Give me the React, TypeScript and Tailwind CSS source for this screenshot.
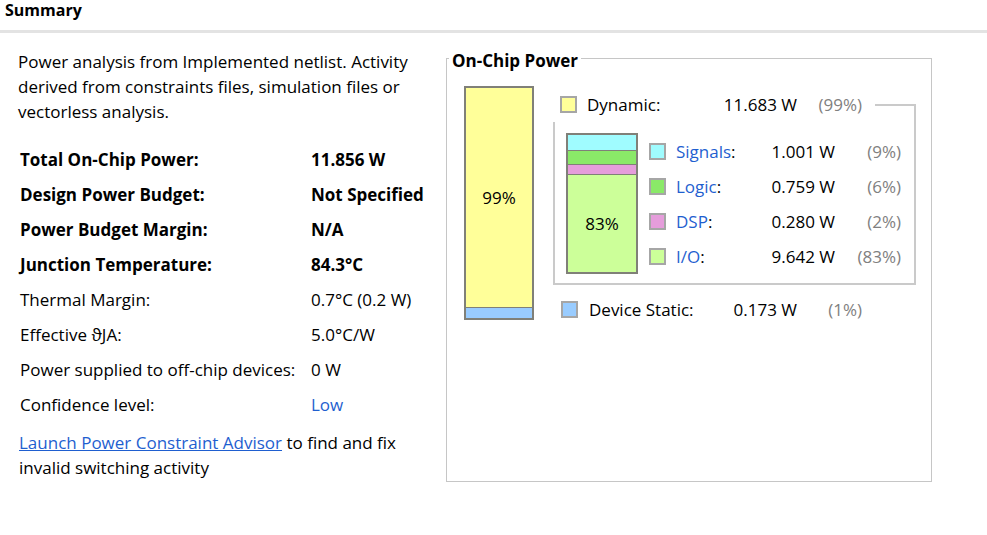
import React from "react";

const font = { fontFamily: '"Open Sans", "Noto Sans", sans-serif' };

function Sq({ color, className = "" }: { color: string; className?: string }) {
  return <div className={`w-[17px] h-[17px] border-2 border-[#a6a6a6] shrink-0 ${className}`} style={{ backgroundColor: color }} />;
}

const rows: [string, string, boolean, boolean?][] = [
  ["Total On-Chip Power:", "11.856 W", true],
  ["Design Power Budget:", "Not Specified", true],
  ["Power Budget Margin:", "N/A", true],
  ["Junction Temperature:", "84.3°C", true],
  ["Thermal Margin:", "0.7°C (0.2 W)", false],
  ["Effective \u03D1JA:", "5.0°C/W", false],
  ["Power supplied to off-chip devices:", "0 W", false],
  ["Confidence level:", "Low", false, true],
];

const subs = [
  { c: "#a0fcff", l: "Signals", v: "1.001 W", p: "(9%)" },
  { c: "#8ae968", l: "Logic", v: "0.759 W", p: "(6%)" },
  { c: "#e59ddb", l: "DSP", v: "0.280 W", p: "(2%)" },
  { c: "#ccff99", l: "I/O", v: "9.642 W", p: "(83%)" },
];

export default function App() {
  return (
    <div className="w-[987px] h-[535px] bg-white text-black text-[17px] overflow-hidden" style={font}>
      <div className="h-[30px] pl-[5px] font-bold text-[16px] leading-[20px] border-b-[3px] border-[#e3e3e3] box-content">Summary</div>
      <div className="flex">
        <div className="w-[446px] shrink-0 pl-[18px] pt-[16px]">
          <p className="leading-[25px] w-[410px]">
            Power analysis from Implemented netlist. Activity derived from constraints files, simulation files or vectorless analysis.
          </p>
          <div className="mt-[18px] pl-[2px]">
            {rows.map(([l, v, b, link]) => (
              <div key={l} className={`flex h-[35px] items-center ${b ? "font-bold" : ""}`}>
                <div className="w-[291px] shrink-0 whitespace-nowrap">{l}</div>
                <div className={`whitespace-nowrap ${link ? "text-[#1f5fd0]" : ""}`}>{v}</div>
              </div>
            ))}
          </div>
          <p className="leading-[25px] mt-[8px] pl-[1px]">
            <span className="text-[#1f5fd0] underline">Launch Power Constraint Advisor</span> to find and fix
            <br />
            invalid switching activity
          </p>
        </div>
        <div className="pt-[25px]">
          <div className="relative w-[486px] h-[424px] border border-[#c6c6c6] pl-[17px] pt-[27px] flex">
            <div className="absolute -top-[10px] left-[2px] bg-white px-[3px] font-bold leading-[24px]">On-Chip Power</div>
            <div className="w-[70px] h-[234px] border-2 border-[#808078] flex flex-col shrink-0">
              <div className="flex-1 bg-[#ffff99] flex items-center justify-center">99%</div>
              <div className="h-[11px] bg-[#99ccff] border-t border-[#808078]" />
            </div>
            <div className="ml-[19px] relative">
              <div className="mt-[18px] w-[363px] h-[181px] border-2 border-[#cacaca] pt-[27px] pl-[11px] flex">
                <div className="w-[72px] h-[141px] border-2 border-[#808078] flex flex-col shrink-0">
                  <div className="h-[16px] bg-[#a0fcff] border-b border-[#808078]" />
                  <div className="h-[14px] bg-[#8ae968] border-b border-[#808078]" />
                  <div className="h-[10px] bg-[#e59ddb] border-b border-[#808078]" />
                  <div className="flex-1 bg-[#ccff99] flex items-center justify-center">83%</div>
                </div>
                <div className="ml-[11px] mt-[1px] flex flex-col">
                  {subs.map((s) => (
                    <div key={s.l} className="h-[35px] flex items-center whitespace-nowrap">
                      <Sq color={s.c} />
                      <div className="w-[104px] pl-[10px] text-[#1f5fd0]">
                        {s.l}<span className="text-black">:</span>
                      </div>
                      <div className="w-[65px] text-right">{s.v}</div>
                      <div className="w-[66px] text-right text-[#808080]">{s.p}</div>
                    </div>
                  ))}
                </div>
              </div>
              <div className="absolute top-[1px] -left-[3px] w-[325px] h-[35px] bg-white flex items-center pl-[10px] whitespace-nowrap">
                <Sq color="#ffff99" />
                <div className="w-[140px] pl-[10px]">Dynamic:</div>
                <div className="w-[80px] text-right">11.683 W</div>
                <div className="w-[65px] text-right text-[#808080]">(99%)</div>
              </div>
              <div className="mt-[7px] h-[35px] flex items-center pl-[8px] whitespace-nowrap">
                <Sq color="#99ccff" />
                <div className="w-[140px] pl-[11px]">Device Static:</div>
                <div className="w-[79px] text-right">0.173 W</div>
                <div className="w-[65px] text-right text-[#808080]">(1%)</div>
              </div>
            </div>
          </div>
        </div>
      </div>
    </div>
  );
}
